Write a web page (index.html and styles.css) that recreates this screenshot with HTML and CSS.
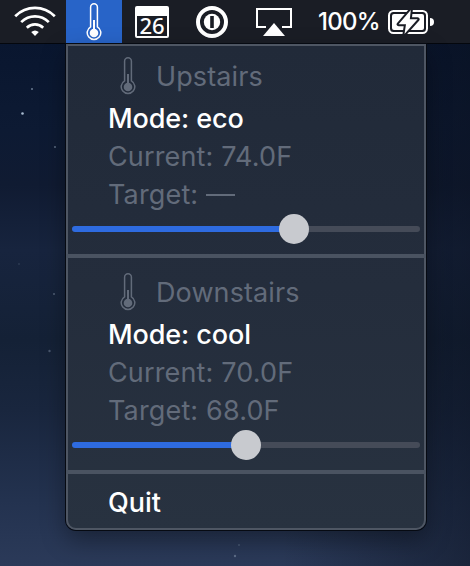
FILE: index.html
```html
<!DOCTYPE html>
<html lang="en">
<head>
<meta charset="utf-8">
<title>Thermostat menu</title>
<link rel="stylesheet" href="styles.css">
</head>
<body>
<svg class="stars" viewBox="0 0 470 566" aria-hidden="true">
  <g fill="#a9bbd0">
    <circle cx="22.500" cy="113.500" r="1.300"/>
    <circle cx="32" cy="89" r="1" opacity=".6"/>
    <circle cx="55" cy="147" r="1" opacity=".5"/>
    <circle cx="54" cy="294" r="1" opacity=".4"/>
    <circle cx="49.500" cy="351" r="1.200" opacity=".35"/>
    <circle cx="19" cy="264" r=".8" opacity=".25"/>
    <circle cx="239" cy="545" r="1" opacity=".25"/>
    <circle cx="235" cy="556" r="1.200" opacity=".4"/>
  </g>
</svg>
<svg class="defs" aria-hidden="true">
  <symbol id="thermometer" viewBox="0 0 16 38">
    <path d="M4.600 23.800V4.200a3.400 3.400 0 0 1 6.800 0v19.600a6.800 6.800 0 1 1-6.800 0Z" fill="none" stroke="currentColor" stroke-width="1.500"/>
    <path d="M8 17v12" stroke="currentColor" stroke-width="2"/>
    <circle cx="8" cy="30" r="4.300" fill="currentColor"/>
  </symbol>
</svg>
<header class="menubar">
  <div class="item wifi">
    <svg width="42" height="30" viewBox="0 0 42 30" fill="none" stroke="#fff" stroke-width="2.700">
      <path d="M1.200 10.200C12.500-.9 29.500-.9 40.800 10.200"/>
      <path d="M7.200 16.100C15 8.500 27 8.500 34.800 16.100"/>
      <path d="M12.800 21.700C17.500 17.300 24.500 17.300 29.200 21.700"/>
      <path d="M17.200 26.100Q21 23 24.800 26.100L21 30Z" fill="#fff" stroke="none"/>
    </svg>
  </div>
  <div class="item active"><svg class="thermo"><use href="#thermometer"/></svg></div>
  <div class="item calendar"><span>26</span></div>
  <div class="item password">
    <svg width="32" height="32" viewBox="0 0 32 32">
      <circle cx="16" cy="16" r="14" fill="none" stroke="#fff" stroke-width="4"/>
      <circle cx="16" cy="16" r="8.200" fill="#fff"/>
      <rect x="14.200" y="10" width="3.600" height="12" fill="#1a1d25"/>
    </svg>
  </div>
  <div class="item airplay">
    <svg width="36" height="29" viewBox="0 0 36 29">
      <path d="M10 19H1V1h34v18h-9" fill="none" stroke="#fff" stroke-width="2"/>
      <path d="M18 15 29 28H7Z" fill="#fff"/>
    </svg>
  </div>
  <div class="item percent">100%</div>
  <div class="item battery">
    <svg width="46" height="26" viewBox="0 0 46 26">
      <rect x="1" y="2" width="38" height="22" rx="4.500" fill="none" stroke="#fff" stroke-width="2"/>
      <rect x="4" y="5" width="32" height="16" rx="2" fill="#fff"/>
      <path d="M42 9q4 0 4 4t-4 4Z" fill="#fff"/>
      <path d="M22.800 1 10.600 15.300h7.400L16.500 25 29.600 10.300h-7.800Z" fill="#fff" stroke="#1a1d25" stroke-width="4" stroke-linejoin="round" paint-order="stroke"/>
    </svg>
  </div>
</header>
<main class="menu">
  <section class="zone">
    <div class="title"><svg class="thermo"><use href="#thermometer"/></svg><span>Upstairs</span></div>
    <div class="row mode">Mode: eco</div>
    <div class="row muted">Current: 74.0F</div>
    <div class="row muted">Target: <span class="dash"></span></div>
    <div class="slider"><div class="fill" style="width:222px"></div><div class="knob"></div><div class="rest"></div></div>
  </section>
  <section class="zone">
    <div class="title"><svg class="thermo"><use href="#thermometer"/></svg><span>Downstairs</span></div>
    <div class="row mode">Mode: cool</div>
    <div class="row muted">Current: 70.0F</div>
    <div class="row muted">Target: 68.0F</div>
    <div class="slider"><div class="fill" style="width:174px"></div><div class="knob"></div><div class="rest"></div></div>
  </section>
  <div class="row quit">Quit</div>
</main>
</body>
</html>
```
FILE: styles.css
```css
* { box-sizing: border-box; }
html, body { height: 100%; }
body {
  margin: 0;
  overflow: hidden;
  font-family: Inter, "Liberation Sans", sans-serif;
  font-size: 27px;
  color: #fff;
  background:
    linear-gradient(90deg, rgba(10, 16, 30, 0) 60%, rgba(10, 16, 30, .5) 100%),
    linear-gradient(#09162f 43px, #0d1a33 130px, #101b32 185px, #17243e 250px, #142136 340px, #19263e 410px, #23324f 500px, #2b3a59 566px);
}
.defs { position: absolute; width: 0; height: 0; }
.stars { position: absolute; inset: 0; width: 470px; height: 566px; }
.menubar {
  position: relative;
  display: flex;
  height: 44px;
  background: #1a1d25;
  border-bottom: 1px solid #04070d;
}
.item { display: flex; flex: none; align-items: flex-start; }
.item svg { display: block; }
.wifi { width: 66px; padding: 6px 0 0 14px; }
.active { width: 56px; height: 43px; padding: 3px 0 0 20px; background: #2864c8; }
.thermo { width: 16px; height: 38px; flex: none; }
.calendar { width: 74px; padding: 6px 0 0 13px; }
.calendar span {
  width: 34px;
  height: 32px;
  border: 2px solid #fff;
  border-top-width: 10px;
  border-radius: 2px;
  font: 500 22px/19px "Noto Sans", sans-serif;
  text-align: center;
}
.password { width: 60px; padding: 6px 0 0; }
.airplay { width: 62px; padding: 8px 0 0; }
.percent { width: 70px; font-size: 24px; line-height: 43px; font-weight: 500; letter-spacing: -.7px; }
.battery { padding-top: 9px; }
.menu {
  position: relative;
  width: 360px;
  height: 486px;
  margin-left: 66px;
  border: 2px solid #4e5663;
  border-radius: 0 0 10px 10px;
  background: linear-gradient(#212a39, #242d3c 50%, #283240);
  box-shadow: 0 0 0 1px #060a12, 0 10px 24px rgba(0, 0, 0, .35);
}
.zone { height: 212px; margin: 0 -2px; padding: 0 2px; border-bottom: 4px solid #4a5361; }
.zone + .zone { height: 216px; padding-top: 4px; }
.title { display: flex; height: 53px; padding: 11px 0 0 52px; color: #626b7a; }
.title span { margin-left: 20px; line-height: 40px; letter-spacing: .1px; }
.row { height: 38px; padding-left: 40px; line-height: 40px; white-space: nowrap; }
.mode { font-weight: 500; letter-spacing: -.1px; }
.muted { color: #626b7a; letter-spacing: .15px; }
.dash { display: inline-block; width: 29px; height: 2px; margin-bottom: 8px; background: #626b7a; }
.slider { display: flex; align-items: center; height: 32px; padding: 0 4px; }
.fill { height: 6px; margin-right: -15px; border-radius: 3px 0 0 3px; background: #2e6be0; }
.knob { width: 30px; height: 30px; border-radius: 50%; background: #c8cacf; z-index: 1; flex: none; }
.rest { flex: 1; height: 6px; margin-left: -15px; border-radius: 0 3px 3px 0; background: #454b58; }
.quit { margin-top: 9px; font-weight: 500; }
```
